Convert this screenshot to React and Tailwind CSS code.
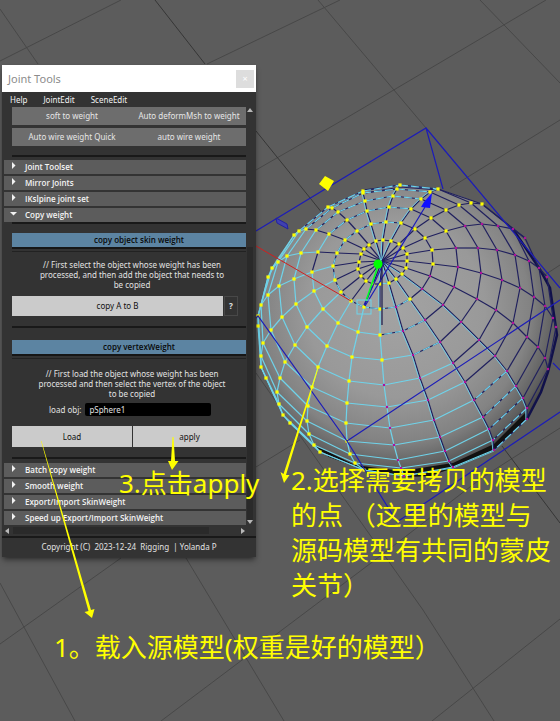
import React from "react";

const POLE = [382, 261];

// Mesh vertices, one list per meridian, from the pole outwards.
const MERIDIANS = [
  [[380,284],[380,309],[380,335],[382,360],[384,385],[387,407],[390,428],[394,445],[398,460],[401,468],[404,476]],
  [[373,284],[364,307],[358,332],[352,357],[349,381],[347,403],[346,423],[347,441],[350,454],[355,463],[364,470]],
  [[366,281],[351,301],[338,323],[327,346],[318,367],[312,387],[308,406],[307,421],[309,434],[314,445],[320,452]],
  [[361,276],[341,292],[323,309],[307,327],[295,345],[285,362],[280,378],[277,392],[279,404],[283,415],[290,423]],
  [[358,269],[335,280],[314,291],[296,304],[282,317],[271,330],[263,343],[261,356],[261,367],[266,378]],
  [[359,262],[333,266],[312,272],[294,279],[279,286],[268,295],[261,305],[258,316],[258,326]],
  [[361,254],[337,253],[318,252],[301,253],[287,256],[278,262],[272,268],[268,277]],
  [[364,249],[345,240],[329,234],[316,230],[306,229],[299,231],[294,235]],
  [[369,245],[357,231],[347,220],[338,212],[332,208],[328,207]],
  [[376,241],[371,224],[367,211],[365,201],[363,193],[363,191]],
  [[383,240],[386,222],[389,207],[393,196],[397,189],[400,185]],
  [[391,241],[401,223],[411,209],[421,199],[430,192],[438,189]],
  [[399,244],[415,229],[431,218],[446,210],[459,205],[471,203],[482,204]],
  [[403,248],[425,238],[446,231],[465,226],[482,224],[498,226],[513,229],[525,238]],
  [[407,254],[432,250],[456,248],[478,248],[497,250],[515,255],[529,261],[539,268],[547,277]],
  [[407,261],[433,264],[458,267],[481,273],[502,280],[520,288],[534,297],[545,306],[553,318],[556,327]],
  [[406,268],[430,276],[454,287],[477,299],[496,310],[513,323],[527,337],[538,347],[545,358],[548,369]],
  [[402,274],[422,289],[443,305],[461,322],[479,340],[495,356],[507,371],[516,386],[523,398],[527,408],[527,419]],
  [[396,279],[410,299],[425,320],[440,342],[453,363],[465,382],[474,400],[483,417],[489,429],[493,440],[494,450]],
  [[389,283],[396,307],[403,331],[413,355],[420,378],[428,400],[434,420],[440,437],[445,451],[449,461],[453,467]],
];

// Number of selected vertices on each meridian.
const SELECTED = [4, 11, 11, 11, 11, 11, 11, 11, 11, 11, 11, 11, 11, 3, 2, 2, 1, 1, 2, 1];

const NAVY = "#20205e";
const CYAN = "#6fd3ea";
const OUTLINE =
  "M258 316L258 326L261 367L266 378L283 415L290 423L314 445L320 452L329 457L364 470L404 477L430 476L453 468L494 451L527 419L541 392L548 372L557 335L556 318L550 288L547 277L539 268L525 241L513 229L482 204L460 196L438 189L400 185L363 191L328 207L306 224L294 235L276 260L268 277Z";

function Mesh() {
  const edges = [];
  const dots = [];
  MERIDIANS.forEach((line, m) => {
    const next = (m + 1) % MERIDIANS.length;
    line.forEach((p, r) => {
      const from = r === 0 ? POLE : line[r - 1];
      let look = "navy";
      if (m <= 5 && r > 1) look = "cyan";
      else if (m === 6 && r > 2) look = "cyan";
      else if (m === 0 || m >= 17) look = "both";
      else if (m === 7 || m === 8) look = r > 4 ? "cyan" : "navy";
      else if (m >= 9 && m <= 11) look = "both";
      edges.push([from, p, look, `m${m}-${r}`]);
      const q = MERIDIANS[next][r];
      if (q) {
        let ring = "navy";
        if (m <= 4 && r > 1) ring = "cyan";
        else if (m === 5 && r > 2) ring = "cyan";
        else if (m >= 7 && m <= 10 && r > 0) ring = "dash";
        else if (m === 6 && r > 1) ring = "cyan";
        else if (m <= 6 && r === 1) ring = "dash";
        else if (m === 19) ring = r > 2 ? "cyan" : "dash";
        else if (m === 18 && r > 0) ring = r > 3 ? "cyan" : "dash";
        else if (m === 17 && r > 5) ring = "dash";
        edges.push([p, q, ring, `r${m}-${r}`]);
      }
      dots.push([p, r < SELECTED[m], `d${m}-${r}`]);
    });
  });
  return (
    <g>
      {edges.map(([a, b, look, key]) => (
        <g key={key}>
          <line x1={a[0]} y1={a[1]} x2={b[0]} y2={b[1]} stroke={look === "cyan" ? CYAN : NAVY} strokeWidth="1.2" />
          {look === "both" && (
            <line x1={a[0] - 1.2} y1={a[1]} x2={b[0] - 1.2} y2={b[1]} stroke={CYAN} strokeWidth="0.9" />
          )}
          {look === "dash" && (
            <line x1={a[0]} y1={a[1]} x2={b[0]} y2={b[1]} stroke={CYAN} strokeWidth="1.2" strokeDasharray="8 3" />
          )}
        </g>
      ))}
      {dots.map(([p, on, key]) => (
        <rect
          key={key}
          x={p[0] - (on ? 1.6 : 1.1)}
          y={p[1] - (on ? 1.6 : 1.1)}
          width={on ? 3.2 : 2.2}
          height={on ? 3.2 : 2.2}
          fill={on ? "#ffff00" : "#b0109c"}
        />
      ))}
    </g>
  );
}

function Viewport() {
  return (
    <svg className="absolute left-0 top-0" width="560" height="721" viewBox="0 0 560 721" aria-hidden="true">
      <defs>
        <radialGradient id="ball" gradientUnits="userSpaceOnUse" cx="396" cy="308" r="178">
          <stop offset="0" stopColor="#a3a3a3" />
          <stop offset="0.5" stopColor="#999999" />
          <stop offset="0.75" stopColor="#838383" />
          <stop offset="0.9" stopColor="#5e5e5e" />
          <stop offset="1" stopColor="#262626" />
        </radialGradient>
      </defs>
      <g stroke="#484848" fill="none">
        <path d="M0 9L38 64M318 0L426 128M480 0L560 83M0 61L121 0M207 64L340 0M256 170L348 117L546 0M450 188L560 120M540 278L560 265M256 467L300 440" />
        <path d="M0 583L75 721M186 558L284 721M256 373L322 467L423 610L494 721M0 644L121 558M161 721L371 563L483 477L560 428M432 721L560 619" />
        <path d="M155 0L205 64M256 131L323 214M502 446L560 523" stroke="#363636" />
      </g>
      <path d={OUTLINE} fill="url(#ball)" />
      <path d="M314 445L329 457L364 470L404 477L430 476L453 468L494 451L527 419L525 413L494 444L453 463L401 471L355 465Z" fill="#111111" />
      <path d="M527 419L541 392L548 372L557 335L550 288L539 268L513 229" fill="none" stroke="#11114a" strokeWidth="2.5" />
      <path d="M438 189L400 185L363 191L328 207L294 235L268 277L258 316L261 367L283 415L320 452L364 470L404 476L453 468L494 451L527 419" fill="none" stroke={CYAN} strokeWidth="0.9" />
      <path d="M525 238L482 204L438 189L400 185L363 190M366 193L400 187L438 190" fill="none" stroke={NAVY} strokeWidth="1.2" />
      <Mesh />
      <g stroke="#1c1cb8" fill="none" strokeWidth="1.2">
        <path d="M256 231L426 128L443 189M426 128L560 288M256 318L258 316L347 441L397 522L560 412M347 441L560 300M553 363L560 370" />
        <path d="M365 306L425 207M364 305L384 262" />
      </g>
      <path d="M424 202L432 193L430 208L421 207Z" fill="#1010ff" />
      <path d="M276 218L287 224L288 229L277 223Z" fill="#4040b0" stroke="#2222a0" />
      <path d="M319 184L325 176L334 181L328 191Z" fill="#ffff00" />
      <path d="M256 246L351 301" stroke="#d02020" />
      <path d="M382 262V325" stroke="#18184a" strokeWidth="1.2" />
      <path d="M378 266L366 301" stroke="#00ff22" strokeWidth="1.6" />
      <rect x="357" y="300" width="14" height="14" fill="none" stroke={CYAN} />
      <circle cx="378" cy="264" r="4.5" fill="#00ff00" />
    </svg>
  );
}

function Arrows() {
  return (
    <svg className="pointer-events-none absolute left-0 top-0" width="560" height="721" viewBox="0 0 560 721" aria-hidden="true">
      <g fill="#ffff00">
        <path d="M41 441L41.500 441L91 610L94.500 609L92 618L84.500 612L88.500 611Z" />
        <path d="M172.500 437L173.500 437L175 461L178.500 461L172 470L168 461L171 461Z" />
        <path d="M317.500 368L318.500 368L286 475L289.500 475L284 483L280.500 472L283.500 474Z" />
      </g>
    </svg>
  );
}

function Section({ label, open }) {
  return (
    <button type="button" aria-expanded={!!open} className="flex h-[14px] w-full items-center bg-[#5c5c5c] text-left font-['Open_Sans','Noto_Sans',sans-serif] text-[8px] leading-[14px] font-semibold text-[#f4f4f4]">
      <svg className="ml-1.5 mr-[5px] size-2.5 shrink-0" viewBox="0 0 10 10" aria-hidden="true">
        <path d={open ? "M0 2H7L3.500 5.500Z" : "M2 0V7L5.500 3.500Z"} fill="#f2f2f2" />
      </svg>
      {label}
    </button>
  );
}

function GreyButton({ children }) {
  return (
    <button type="button" className="h-[18px] bg-[#6d6d6d] text-[#e6e6e6]">
      {children}
    </button>
  );
}

function BlueHeading({ children }) {
  return (
    <div>
      <h2 className="border-b-2 border-[#161616] bg-[#5c84a2] pl-5 text-center font-['Open_Sans','Noto_Sans',sans-serif] text-[8px] leading-[14px] font-semibold text-[#080808]">{children}</h2>
      <div className="mt-0.5 h-px bg-[#222222]" />
    </div>
  );
}

function Rule() {
  return <hr className="h-0.5 border-0 bg-[#191919]" />;
}

function JointTools() {
  return (
    <section className="relative w-[254px] bg-[#333333] font-['Noto_Sans','Noto_Sans_CJK_SC',sans-serif] text-[8px] leading-[10px] text-[#e2e2e2] shadow-md shadow-black/40">
      <header className="flex h-[27px] items-center justify-between bg-white pl-1.5 pr-0.5">
        <h1 className="text-[11px] leading-4 text-[#8c8c8c]">Joint Tools</h1>
        <button type="button" aria-label="Close" className="flex size-[18px] items-center justify-center bg-[#dddddd] text-[9px] text-white">
          ×
        </button>
      </header>
      <nav className="flex h-[15px] items-center gap-4 pl-2 text-[#f2f2f2]">
        <button type="button">Help</button>
        <button type="button">JointEdit</button>
        <button type="button">SceneEdit</button>
      </nav>
      <div className="flex">
        <div className="min-w-0 flex-1 pl-0.5">
          <div className="ml-2 grid grid-cols-[120px_1fr] gap-y-[3px]">
            <GreyButton>soft to weight</GreyButton>
            <GreyButton>Auto deformMsh to weight</GreyButton>
            <GreyButton>Auto wire weight Quick</GreyButton>
            <GreyButton>auto wire weight</GreyButton>
          </div>
          <div className="ml-2 mt-[9px] mb-[3px]"><Rule /></div>
          <div className="flex flex-col gap-0.5">
            <Section label="Joint Toolset" />
            <Section label="Mirror Joints" />
            <Section label="IKslpine joint set" />
            <Section label="Copy weight" open />
          </div>
          <div className="ml-2 flex flex-col">
            <Rule />
            <div className="mt-[9px]">
              <BlueHeading>copy object skin weight</BlueHeading>
            </div>
            <p className="mt-2 pl-1.5 text-center">
              // First select the object whose weight has been<br />
              processed, and then add the object that needs to<br />
              be copied
            </p>
            <div className="mt-1.5 flex gap-px pr-2">
              <button type="button" className="h-5 flex-1 bg-[#cbcbcb] text-[#101010]">copy A to B</button>
              <button type="button" aria-label="Help on copy A to B" className="h-5 w-[14px] border border-[#484848] font-bold">?</button>
            </div>
            <div className="mt-[10px] mb-3"><Rule /></div>
            <BlueHeading>copy vertexWeight</BlueHeading>
            <p className="mt-[10px] pl-1.5 text-center">
              // First load the object whose weight has been<br />
              processed and then select the vertex of the object<br />
              to be copied
            </p>
            <div className="mt-1 flex items-center gap-1 pl-[37px]">
              <label htmlFor="load-obj">load obj:</label>
              <input id="load-obj" type="text" defaultValue="pSphere1" className="h-[13px] w-[126px] rounded-xs bg-black px-1 text-[8px] text-[#e2e2e2]" />
            </div>
            <div className="mt-[10px] grid grid-cols-[120px_1fr] gap-px text-[#101010]">
              <button type="button" className="h-[21px] bg-[#cbcbcb]">Load</button>
              <button type="button" className="h-[21px] bg-[#cbcbcb]">apply</button>
            </div>
            <div className="mt-[10px] mb-1"><Rule /></div>
          </div>
          <div className="flex flex-col gap-0.5">
            <Section label="Batch copy weight" />
            <Section label="Smooth weight" />
            <Section label="Export/Import SkinWeight" />
            <Section label="Speed up Export/Import SkinWeight" />
          </div>
        </div>
        <div className="flex w-2 flex-col items-center py-px mr-0.5" aria-hidden="true">
          <svg width="6" height="4"><path d="M0 4L3 0L6 4Z" fill="#b8b8b8" /></svg>
          <div className="mt-[135px] w-1.5 flex-1 bg-[#2a2a2a]" />
          <svg width="6" height="4"><path d="M0 0L3 4L6 0Z" fill="#b8b8b8" /></svg>
        </div>
      </div>
      <div className="flex h-[11px] items-center pl-[3px] pr-[11px]" aria-hidden="true">
        <svg width="4" height="6"><path d="M4 0L0 3L4 6Z" fill="#b8b8b8" /></svg>
        <div className="ml-1 mr-[32px] h-[7px] flex-1 bg-[#2a2a2a]" />
        <svg width="4" height="6"><path d="M0 0L4 3L0 6Z" fill="#b8b8b8" /></svg>
      </div>
      <Rule />
      <footer className="h-[19px] whitespace-pre text-center leading-[18px]">Copyright (C)  2023-12-24  Rigging  | Yolanda P</footer>
    </section>
  );
}

export default function App() {
  return (
    <main className="relative min-h-screen overflow-hidden bg-[#5c5c5c] pb-8 font-['Noto_Sans','Noto_Sans_CJK_SC',sans-serif]">
      <Viewport />
      <div className="pt-[65px] pl-0.5">
        <JointTools />
      </div>
      <Arrows />
      <p className="absolute left-[119px] top-[466px] whitespace-nowrap text-[26px] leading-[35px] text-[#ffff00]">3.点击apply</p>
      <p className="absolute left-[291px] top-[463px] whitespace-nowrap text-[26px] leading-[35px] text-[#ffff00]">
        2.选择需要拷贝的模型<br />
        的点 （这里的模型与<br />
        源码模型有共同的蒙皮<br />
        关节）
      </p>
      <p className="absolute left-[54px] top-[630px] whitespace-nowrap text-[26px] leading-[35px] text-[#ffff00]">1。载入源模型(权重是好的模型）</p>
    </main>
  );
}
